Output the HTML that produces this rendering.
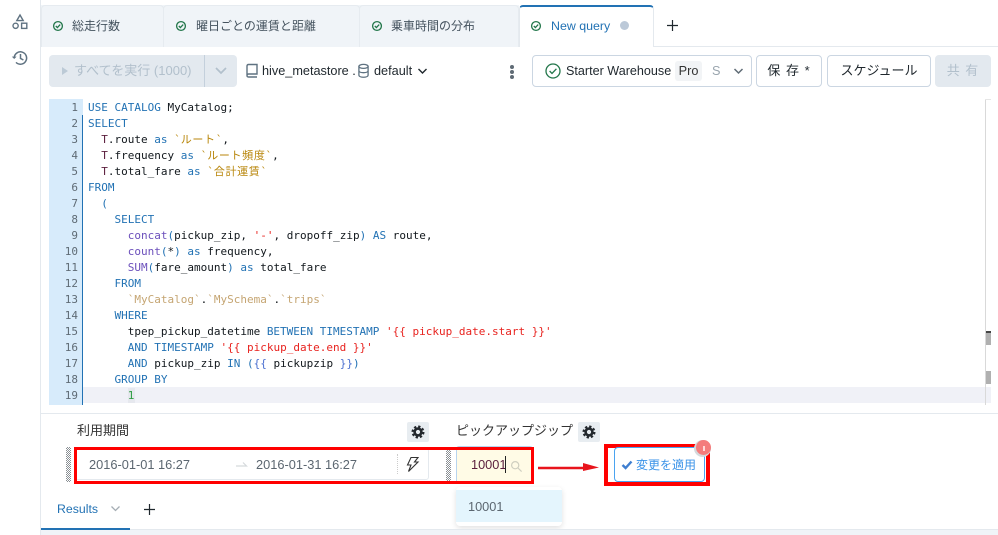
<!DOCTYPE html>
<html lang="ja"><head><meta charset="utf-8">
<style>
html,body{margin:0;padding:0;background:#fff}
body{width:998px;height:535px;position:relative;overflow:hidden;font-family:"Liberation Sans","Noto Sans CJK JP",sans-serif;font-size:12.7px;color:#1f272d}
.a{position:absolute;box-sizing:border-box;white-space:nowrap}
.tab{position:absolute;top:5px;height:42px;background:#f0f4f8;border:1px solid #e6ebf0;border-bottom:none;border-radius:4px 4px 0 0;box-sizing:border-box}
.tl{position:absolute;top:18px;font-size:12px;line-height:16px;color:#44525e;white-space:nowrap}
.btn{position:absolute;box-sizing:border-box;border:1px solid #cbd6e2;border-radius:4px;background:#fff;text-align:center;font-size:13px;white-space:nowrap;height:32px;top:55px;line-height:30px}
.code{position:absolute;left:88px;top:100px;font-family:"DejaVu Sans Mono","Noto Sans CJK JP",monospace;font-size:11px;line-height:16px;white-space:pre;color:#11171c}
.num{position:absolute;left:49px;top:100px;width:29px;text-align:right;font-family:"DejaVu Sans Mono",monospace;font-size:11px;line-height:16px;color:#5f6b75;white-space:pre}
.k{color:#2272b4}.f{color:#6b4fbb}.s{color:#b8860b}.r{color:#e8231f}.v{color:#5b1e3c}.b{color:#4a6fd0}.p{color:#c5a572}.g{color:#2f9e44}
.j{letter-spacing:.65px}
.redbox{position:absolute;box-sizing:border-box;border:3px solid #f00}
.dots{position:absolute;width:5px;background:repeating-conic-gradient(#8a8f94 0 25%,#fff 0 50%) 0 0/2px 2px}
</style></head><body>

<!-- side rail -->
<div class="a" style="left:0;top:0;width:41px;height:535px;border-right:1px solid #e4e9ee;background:#fff"></div>
<svg class="a" style="left:11px;top:13px" width="18" height="18" viewBox="0 0 18 18" fill="none" stroke="#5f7281" stroke-width="1.4"><path d="M9 2 L12.2 7.6 H5.8 Z"/><circle cx="4.6" cy="12.8" r="2.6"/><rect x="10.6" y="10.2" width="5.2" height="5.2"/></svg>
<svg class="a" style="left:11px;top:49px" width="18" height="18" viewBox="0 0 18 18" fill="none" stroke="#5f7281" stroke-width="1.5"><path d="M3.2 9 A6.2 6.2 0 1 1 5 13.4"/><path d="M9.5 5 V9.4 L12.4 11"/><path d="M.8 7.6 L3.2 10 L5.6 7.6" fill="#5f7281" stroke="none"/></svg>

<!-- tab strip -->
<div class="a" style="left:41px;top:5px;width:478px;height:42px;background:#f0f4f8"></div>
<div class="a" style="left:41px;top:46px;width:957px;height:1px;background:#e4e9ee"></div>
<div class="tab" style="left:41px;width:123px"></div>
<div class="tab" style="left:163px;width:197px"></div>
<div class="tab" style="left:359px;width:160px"></div>
<div class="a" style="left:519px;top:5px;width:135px;height:42px;background:#fff;border:1px solid #e4e9ee;border-top:2px solid #2272b4;border-bottom:none;border-radius:4px 4px 0 0"></div>

<svg class="a" style="left:52px;top:20px" width="12" height="12" viewBox="0 0 12 12" fill="none" stroke="#22764a" stroke-width="1.3"><circle cx="6" cy="6" r="4.4"/><path d="M3.8 6 L5.4 7.6 L8.2 4.6"/></svg>
<div class="tl" style="left:72px">総走行数</div>
<svg class="a" style="left:175px;top:20px" width="12" height="12" viewBox="0 0 12 12" fill="none" stroke="#22764a" stroke-width="1.3"><circle cx="6" cy="6" r="4.4"/><path d="M3.8 6 L5.4 7.6 L8.2 4.6"/></svg>
<div class="tl" style="left:196px">曜日ごとの運賃と距離</div>
<svg class="a" style="left:371px;top:20px" width="12" height="12" viewBox="0 0 12 12" fill="none" stroke="#22764a" stroke-width="1.3"><circle cx="6" cy="6" r="4.4"/><path d="M3.8 6 L5.4 7.6 L8.2 4.6"/></svg>
<div class="tl" style="left:391px">乗車時間の分布</div>
<svg class="a" style="left:530px;top:20px" width="12" height="12" viewBox="0 0 12 12" fill="none" stroke="#22764a" stroke-width="1.3"><circle cx="6" cy="6" r="4.4"/><path d="M3.8 6 L5.4 7.6 L8.2 4.6"/></svg>
<div class="tl" style="left:551px;color:#2272b4;font-size:12.4px">New query</div>
<div class="a" style="left:620px;top:21px;width:9px;height:9px;border-radius:50%;background:#bcc9d8"></div>
<svg class="a" style="left:666px;top:19px" width="13" height="13" viewBox="0 0 13 13" stroke="#1f272d" stroke-width="1.2"><path d="M6.5 1 V12 M1 6.5 H12"/></svg>

<!-- toolbar left -->
<div class="a" style="left:49px;top:55px;width:188px;height:32px;background:#e3e9ef;border-radius:4px"></div>
<div class="a" style="left:204px;top:55px;width:1px;height:32px;background:#c4d0dc"></div>
<div class="a" style="left:62px;top:67px;width:0;height:0;border-left:6px solid #bccad6;border-top:4px solid transparent;border-bottom:4px solid transparent"></div>
<div class="a" style="left:74px;top:63px;font-size:13px;line-height:16px;color:#b2c0cc">すべてを実行 (1000)</div>
<svg class="a" style="left:214px;top:66px" width="14" height="10" viewBox="0 0 14 10" fill="none" stroke="#b2c0cc" stroke-width="1.7"><path d="M2 2 L7 7 L12 2"/></svg>
<svg class="a" style="left:245px;top:63px" width="14" height="16" viewBox="0 0 14 16" fill="none" stroke="#5f7281" stroke-width="1.4"><path d="M2 12 V3 Q2 1.5 3.5 1.5 H12 V11 H3.5 Q2 11 2 12.5 Q2 14 3.5 14 H12"/></svg>
<div class="a" style="left:262px;top:63px;line-height:16px;font-size:12.7px;color:#1f272d">hive_metastore .</div>
<svg class="a" style="left:357px;top:63px" width="13" height="16" viewBox="0 0 13 16" fill="none" stroke="#5f7281" stroke-width="1.3"><ellipse cx="6.5" cy="3.4" rx="4.6" ry="2"/><path d="M1.9 3.4 V12 C1.9 15 11.1 15 11.1 12 V3.4 M1.9 7.6 C1.9 10.4 11.1 10.4 11.1 7.6"/></svg>
<div class="a" style="left:374px;top:63px;line-height:16px;font-size:12.7px;color:#1f272d">default</div>
<svg class="a" style="left:417px;top:68px" width="11" height="7" viewBox="0 0 11 7" fill="none" stroke="#1f272d" stroke-width="1.4"><path d="M1.5 1 L5.5 5 L9.5 1"/></svg>
<div class="a" style="left:510px;top:65px;width:4px;height:4px;border-radius:50%;background:#5f6b75"></div>
<div class="a" style="left:510px;top:70px;width:4px;height:4px;border-radius:50%;background:#5f6b75"></div>
<div class="a" style="left:510px;top:75px;width:4px;height:4px;border-radius:50%;background:#5f6b75"></div>

<!-- toolbar right -->
<div class="btn" style="left:532px;width:220px"></div>
<svg class="a" style="left:545px;top:63px" width="16" height="16" viewBox="0 0 16 16" fill="none" stroke="#22764a" stroke-width="1.3"><circle cx="8" cy="8" r="7"/><path d="M4.6 8 L7 10.4 L11.4 5.8"/></svg>
<div class="a" style="left:566px;top:63px;line-height:16px;font-size:12.6px">Starter Warehouse</div>
<div class="a" style="left:675px;top:61px;width:27px;height:20px;background:#f2f4f6;border-radius:3px;text-align:center;line-height:20px;font-size:12.7px;color:#333">Pro</div>
<div class="a" style="left:712px;top:63px;line-height:16px;font-size:12.7px;color:#9aa5ae">S</div>
<svg class="a" style="left:733px;top:68px" width="11" height="7" viewBox="0 0 11 7" fill="none" stroke="#5f6b75" stroke-width="1.5"><path d="M1.5 1 L5.5 5 L9.5 1"/></svg>
<div class="btn" style="left:756px;width:66px;letter-spacing:1px">保 存 *</div>
<div class="btn" style="left:827px;width:104px">スケジュール</div>
<div class="btn" style="left:935px;width:56px;background:#e3e9ef;border-color:#e3e9ef;color:#b2c0cc;letter-spacing:1px">共 有</div>

<!-- editor -->
<div class="a" style="left:49px;top:99px;width:34px;height:306px;background:#d7ebfb"></div>
<div class="a" style="left:82px;top:115px;width:1px;height:290px;background:#2272b4"></div>
<div class="a" style="left:83px;top:387px;width:908px;height:16px;background:#f0f1f7"></div>
<div class="a" style="left:128px;top:388px;width:7px;height:15px;background:#e6e8ee"></div>
<div class="a" style="left:985px;top:99px;width:1px;height:306px;background:#d9d9d9"></div>
<div class="a" style="left:985px;top:99px;width:6px;height:1px;background:#e6e6e6"></div>
<div class="a" style="left:986px;top:331px;width:5px;height:14px;background:#b0b0b0"></div>
<div class="a" style="left:986px;top:331px;width:5px;height:2px;background:#444"></div>
<div class="a" style="left:986px;top:371px;width:5px;height:13px;background:#b0b0b0"></div>

<div class="num"> 1
 2
 3
 4
 5
 6
 7
 8
 9
10
11
12
13
14
15
16
17
18
19</div>
<div class="code"><span class="k">USE CATALOG</span> MyCatalog;
<span class="k">SELECT</span>
  <span class="v">T</span>.route <span class="k">as</span> <span class="s">`<span class="j">ルート</span>`</span>,
  <span class="v">T</span>.frequency <span class="k">as</span> <span class="s">`<span class="j">ルート頻度</span>`</span>,
  <span class="v">T</span>.total_fare <span class="k">as</span> <span class="s">`<span class="j">合計運賃</span>`</span>
<span class="k">FROM</span>
  <span class="k">(</span>
    <span class="k">SELECT</span>
      <span class="f">concat</span><span class="k">(</span>pickup_zip, <span class="r">'-'</span>, dropoff_zip<span class="k">)</span> <span class="k">AS</span> route,
      <span class="f">count</span><span class="k">(</span>*<span class="k">)</span> <span class="k">as</span> frequency,
      <span class="f">SUM</span><span class="k">(</span>fare_amount<span class="k">)</span> <span class="k">as</span> total_fare
    <span class="k">FROM</span>
      <span class="p">`MyCatalog`</span>.<span class="p">`MySchema`</span>.<span class="p">`trips`</span>
    <span class="k">WHERE</span>
      tpep_pickup_datetime <span class="k">BETWEEN TIMESTAMP</span> <span class="r">'{{ pickup_date.start }}'</span>
      <span class="k">AND TIMESTAMP</span> <span class="r">'{{ pickup_date.end }}'</span>
      <span class="k">AND</span> pickup_zip <span class="k">IN</span> <span class="k">(</span><span class="b">{{</span> pickupzip <span class="b">}}</span><span class="k">)</span>
    <span class="k">GROUP BY</span>
      <span class="g">1</span></div>

<!-- parameters -->
<div class="a" style="left:41px;top:413px;width:957px;height:1px;background:#e4e9ee"></div>
<div class="a" style="left:77px;top:423px;font-size:13px;line-height:16px;color:#333">利用期間</div>
<div class="a" style="left:407px;top:422px;width:22px;height:20px;background:#e8edf1;border-radius:2px"></div>
<svg class="a" style="left:411px;top:425px" width="14" height="14" viewBox="0 0 14 14" fill="none" stroke="#23282d"><circle cx="7" cy="7" r="3.4" stroke-width="2.6"/><circle cx="7" cy="7" r="5.4" stroke-width="2.2" stroke-dasharray="2.3 1.94"/></svg>
<div class="a" style="left:456px;top:423px;font-size:13px;line-height:16px;color:#333">ピックアップジップ</div>
<div class="a" style="left:578px;top:422px;width:22px;height:20px;background:#e8edf1;border-radius:2px"></div>
<svg class="a" style="left:582px;top:425px" width="14" height="14" viewBox="0 0 14 14" fill="none" stroke="#23282d"><circle cx="7" cy="7" r="3.4" stroke-width="2.6"/><circle cx="7" cy="7" r="5.4" stroke-width="2.2" stroke-dasharray="2.3 1.94"/></svg>

<div class="dots" style="left:66px;top:447px;height:35px"></div>
<div class="a" style="left:75px;top:448px;width:354px;height:32px;border:1px solid #e4e9ee;border-radius:3px"></div>
<div class="a" style="left:89px;top:457px;font-size:12.8px;line-height:16px;color:#5b6670">2016-01-01 16:27</div>
<svg class="a" style="left:235px;top:460px" width="13" height="8" viewBox="0 0 13 8" fill="none" stroke="#d5d9dc" stroke-width="1.2"><path d="M1 6 H11.5 L8 2.5"/></svg>
<div class="a" style="left:256px;top:457px;font-size:12.8px;line-height:16px;color:#5b6670">2016-01-31 16:27</div>
<div class="a" style="left:397px;top:454px;width:1px;height:20px;border-left:1px dotted #ccc"></div>
<svg class="a" style="left:405px;top:456px" width="15" height="17" viewBox="0 0 15 17" fill="none" stroke="#333" stroke-width="1.1"><path d="M6 1.5 H13 L9.5 6 H13 L3.5 15.5 L6 9 H2.5 Z"/></svg>

<div class="dots" style="left:446px;top:450px;height:31px"></div>
<div class="a" style="left:456px;top:446px;width:77px;height:38px;background:#fffbe6;border:1px solid #b8d4ee;border-radius:3px"></div>
<div class="redbox" style="left:74px;top:447px;width:460px;height:37px"></div>
<div class="a" style="left:471px;top:457px;font-size:12.75px;line-height:16px;color:#5b1e3c">10001</div>
<div class="a" style="left:505px;top:456px;width:1px;height:17px;background:#222"></div>
<svg class="a" style="left:510px;top:460px" width="13" height="13" viewBox="0 0 13 13" fill="none" stroke="#cfcfc0" stroke-width="1.2"><circle cx="5.2" cy="5.2" r="3.6"/><path d="M8 8 L11.6 11.6"/></svg>

<div class="a" style="left:456px;top:487px;width:106px;height:39px;background:#fff;border-radius:4px;box-shadow:0 2px 6px rgba(0,0,0,.12)"></div>
<div class="a" style="left:456px;top:490px;width:106px;height:32px;background:#e4f5fd;padding-left:12px;line-height:33px;font-size:12.75px;color:#5b6670">10001</div>

<svg class="a" style="left:536px;top:460px" width="66" height="14" viewBox="0 0 66 14"><path d="M2 8 H50" stroke="#e8141c" stroke-width="2.4"/><path d="M47 3 L63 7.5 L47 11 Z" fill="#e8141c"/></svg>

<div class="redbox" style="left:604px;top:444px;width:106px;height:42px;border-width:4px"></div>
<div class="a" style="left:614px;top:447px;width:91px;height:35px;background:#fff;border:1px solid #4aa3f0;border-radius:4px"></div>
<svg class="a" style="left:621px;top:460px" width="12" height="10" viewBox="0 0 12 10" fill="none" stroke="#3f7fd0" stroke-width="2.4"><path d="M1.5 5 L4.6 8 L10.5 1.5"/></svg>
<div class="a" style="left:636px;top:457px;font-size:12px;line-height:16px;color:#3b93e8">変更を適用</div>
<div class="a" style="left:696px;top:440px;width:15px;height:15px;border-radius:50%;background:#f47c7c;box-shadow:-1px 1px 0 1px #d5d9dc"></div>
<div class="a" style="left:703px;top:446px;width:2px;height:5px;background:#ffd9d9"></div>

<!-- results -->
<div class="a" style="left:57px;top:501px;font-size:12.3px;line-height:16px;color:#2272b4">Results</div>
<svg class="a" style="left:110px;top:505px" width="11" height="8" viewBox="0 0 11 8" fill="none" stroke="#a5adb4" stroke-width="1.3"><path d="M1.5 1.5 L5.5 5.5 L9.5 1.5"/></svg>
<svg class="a" style="left:143px;top:503px" width="13" height="13" viewBox="0 0 13 13" stroke="#1f272d" stroke-width="1.2"><path d="M6.5 1 V12 M1 6.5 H12"/></svg>
<div class="a" style="left:41px;top:529px;width:957px;height:1px;background:#e4e9ee"></div>
<div class="a" style="left:41px;top:530px;width:957px;height:5px;background:#f0f4f8"></div>
<div class="a" style="left:41px;top:528px;width:89px;height:2px;background:#2272b4"></div>
</body></html>
